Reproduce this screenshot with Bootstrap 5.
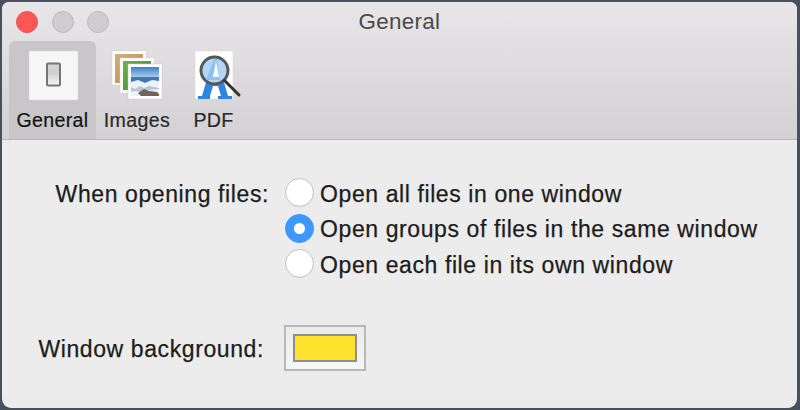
<!DOCTYPE html>
<html lang="en">
<head>
<meta charset="utf-8">
<title>General</title>
<link rel="stylesheet" href="https://cdn.jsdelivr.net/npm/bootstrap@5.3.0/dist/css/bootstrap.min.css">
<style>
html,body{width:800px;height:410px;overflow:hidden;margin:0;background:#48505e;}
body{font-family:"Liberation Sans",Arial,sans-serif;color:#1c1c1c;padding:2px 3px 2px 2px;}
.prefs-win{width:795px;height:406px;background:#ececec;border-radius:7px 7px 9px 9px;overflow:hidden;}
.prefs-head{height:138px;background:linear-gradient(#e8e6e8,#d3d1d3);border-bottom:1px solid #bab8ba;flex:none;}
.title-row{height:39px;padding-left:14px;}
.light{width:22px;height:22px;border-radius:50%;background:#cfcdcf;border:1px solid #bdbbbd;margin-right:13.5px;}
.light-red{background:#fc5753;border-color:#f2504c;}
.win-title{left:0;right:0;top:8px;font-size:22.4px;line-height:24px;letter-spacing:.3px;color:#4b4a4b;text-align:center;}
.tabs-row{padding-left:7px;height:98px;}
.tab-item{width:87px;height:98px;border-radius:6px 6px 0 0;font-size:19.6px;line-height:22px;letter-spacing:.35px;color:#2a2a2a;padding-top:9px;-webkit-text-stroke:.2px currentColor;}
.tab-on{background:#c8c6c8;color:#141414;}
.tab-narrow{width:82px;}
.tab-pdf{width:71px;}
.tab-icon{width:52px;height:52px;margin-bottom:7px;display:block;overflow:visible;}
.form-area{padding-top:35px;-webkit-text-stroke:.25px #1c1c1c;}
.opt-row{height:35.5px;font-size:23px;letter-spacing:.6px;color:#1c1c1c;}
.opt-text{padding-top:2px;}
.lab-cell{width:267px;text-align:right;flex:none;padding-top:2px;}
.lab-cell2{width:262px;text-align:right;flex:none;font-size:23px;letter-spacing:.6px;padding-top:4px;}
.radio-dot{width:29px;height:29px;border-radius:50%;background:#fff;border:1px solid #c0c0c0;flex:none;margin:0 6px 0 16px;box-shadow:inset 0 -1px 1px #f2f2f2;}
.radio-on{background:#3d98fb;border-color:#3d98fb;box-shadow:none;}
.radio-on::after{content:"";width:11px;height:11px;border-radius:50%;background:#fff;}
.bg-row{margin-top:43px;height:46px;}
.swatch-outer{width:82px;height:46px;margin-left:20px;background:linear-gradient(#ebebeb,#f6f6f6);border:2px solid #b8b8b8;}
.swatch-inner{width:64px;height:28px;background:#ffe22e;border:2px solid #8f8f8f;}
</style>
</head>
<body>
<div class="prefs-win d-flex flex-column">
  <div class="prefs-head position-relative">
    <div class="win-title position-absolute">General</div>
    <div class="title-row d-flex align-items-center">
      <span class="light light-red"></span><span class="light"></span><span class="light"></span>
    </div>
    <div class="tabs-row d-flex">
      <div class="tab-item tab-on d-flex flex-column align-items-center">
        <svg class="tab-icon" viewBox="0 0 52 52">
          <defs><linearGradient id="sw" x1="0" y1="0" x2="0" y2="1"><stop offset="0" stop-color="#d6d6d6"/><stop offset=".45" stop-color="#cfcfcf"/><stop offset=".6" stop-color="#dcdcdc"/><stop offset="1" stop-color="#f4f4f4"/></linearGradient></defs>
          <rect x="2" y="1" width="49" height="49" rx="1.5" fill="#f6f6f6" stroke="#dedcde" stroke-width=".6"/>
          <rect x="20" y="13.5" width="13" height="22" rx="1" fill="url(#sw)" stroke="#757575" stroke-width="2"/>
        </svg>
        <span>General</span>
      </div>
      <div class="tab-item tab-narrow d-flex flex-column align-items-center">
        <svg class="tab-icon" viewBox="0 0 52 52">
          <defs>
            <linearGradient id="sky" x1="0" y1="0" x2="0" y2="1"><stop offset="0" stop-color="#3d80c8"/><stop offset="1" stop-color="#a9cbe8"/></linearGradient>
            <linearGradient id="wood" x1="0" y1="0" x2="1" y2="1"><stop offset="0" stop-color="#d3ad78"/><stop offset="1" stop-color="#b98c55"/></linearGradient>
            <linearGradient id="leaf" x1="0" y1="0" x2="1" y2="1"><stop offset="0" stop-color="#6fb04c"/><stop offset="1" stop-color="#3b8c33"/></linearGradient>
          </defs>
          <rect x="1" y="1" width="34" height="34" fill="#fff" stroke="#d4d4d4" stroke-width=".5"/>
          <rect x="4" y="4" width="28" height="29" fill="url(#wood)"/>
          <rect x="9" y="8" width="34" height="35" fill="#fff" stroke="#d4d4d4" stroke-width=".5"/>
          <rect x="12" y="11" width="28" height="29" fill="url(#leaf)"/>
          <rect x="17" y="14" width="34" height="35" fill="#fff" stroke="#c8c8c8" stroke-width=".5"/>
          <rect x="20" y="17" width="28" height="29" fill="#edf2f6"/>
          <rect x="20" y="17" width="28" height="10" fill="url(#sky)"/>
          <path d="M20 27 H48 V31 L41 30 L34 33 L27 30 L20 32Z" fill="#3f78b4"/>
          <path d="M20 37 L24 39 L29 36 L33 38 L38 36 L48 38 V39 L38 40 L32 42 L24 41 L20 42Z" fill="#b9c6d2"/>
          <path d="M27 43 L33 39 L38 41 L46 42 L48 44 V46 H30Z" fill="#6f6459"/>
        </svg>
        <span>Images</span>
      </div>
      <div class="tab-item tab-pdf d-flex flex-column align-items-center">
        <svg class="tab-icon" viewBox="0 0 52 52">
          <rect x="7" y="1" width="38" height="48" fill="#fff" stroke="#d8d8d8" stroke-width=".5"/>
          <path d="M14 46 L24 12 H30 L40 46Z" fill="#2f84e0"/>
          <path d="M10 49 V46 H22 V49Z M30 49 V46 H44 V49Z" fill="#2f84e0"/>
          <path d="M22 46 L25 36 H30 L33 46Z" fill="#fff"/>
          <circle cx="26.5" cy="20.5" r="13.5" fill="#b4d6f4" stroke="#55585b" stroke-width="3"/>
          <path d="M18 30 L26 9 H29 L32 30Z" fill="#8cc2f2"/>
          <path d="M25 27 L28 11 L31 27Z" fill="#fff"/>
          <path d="M36.500 30.500 L51 45" stroke="#333" stroke-width="3" stroke-linecap="round"/>
        </svg>
        <span>PDF</span>
      </div>
    </div>
  </div>
  <div class="form-area">
    <div class="opt-row d-flex align-items-center">
      <div class="lab-cell">When opening files:</div>
      <span class="radio-dot"></span><span class="opt-text">Open all files in one window</span>
    </div>
    <div class="opt-row d-flex align-items-center">
      <div class="lab-cell"></div>
      <span class="radio-dot radio-on d-flex align-items-center justify-content-center"></span><span class="opt-text">Open groups of files in the same window</span>
    </div>
    <div class="opt-row d-flex align-items-center">
      <div class="lab-cell"></div>
      <span class="radio-dot"></span><span class="opt-text">Open each file in its own window</span>
    </div>
    <div class="bg-row d-flex align-items-center">
      <div class="lab-cell2">Window background:</div>
      <div class="swatch-outer d-flex align-items-center justify-content-center"><div class="swatch-inner"></div></div>
    </div>
  </div>
</div>
</body>
</html>
